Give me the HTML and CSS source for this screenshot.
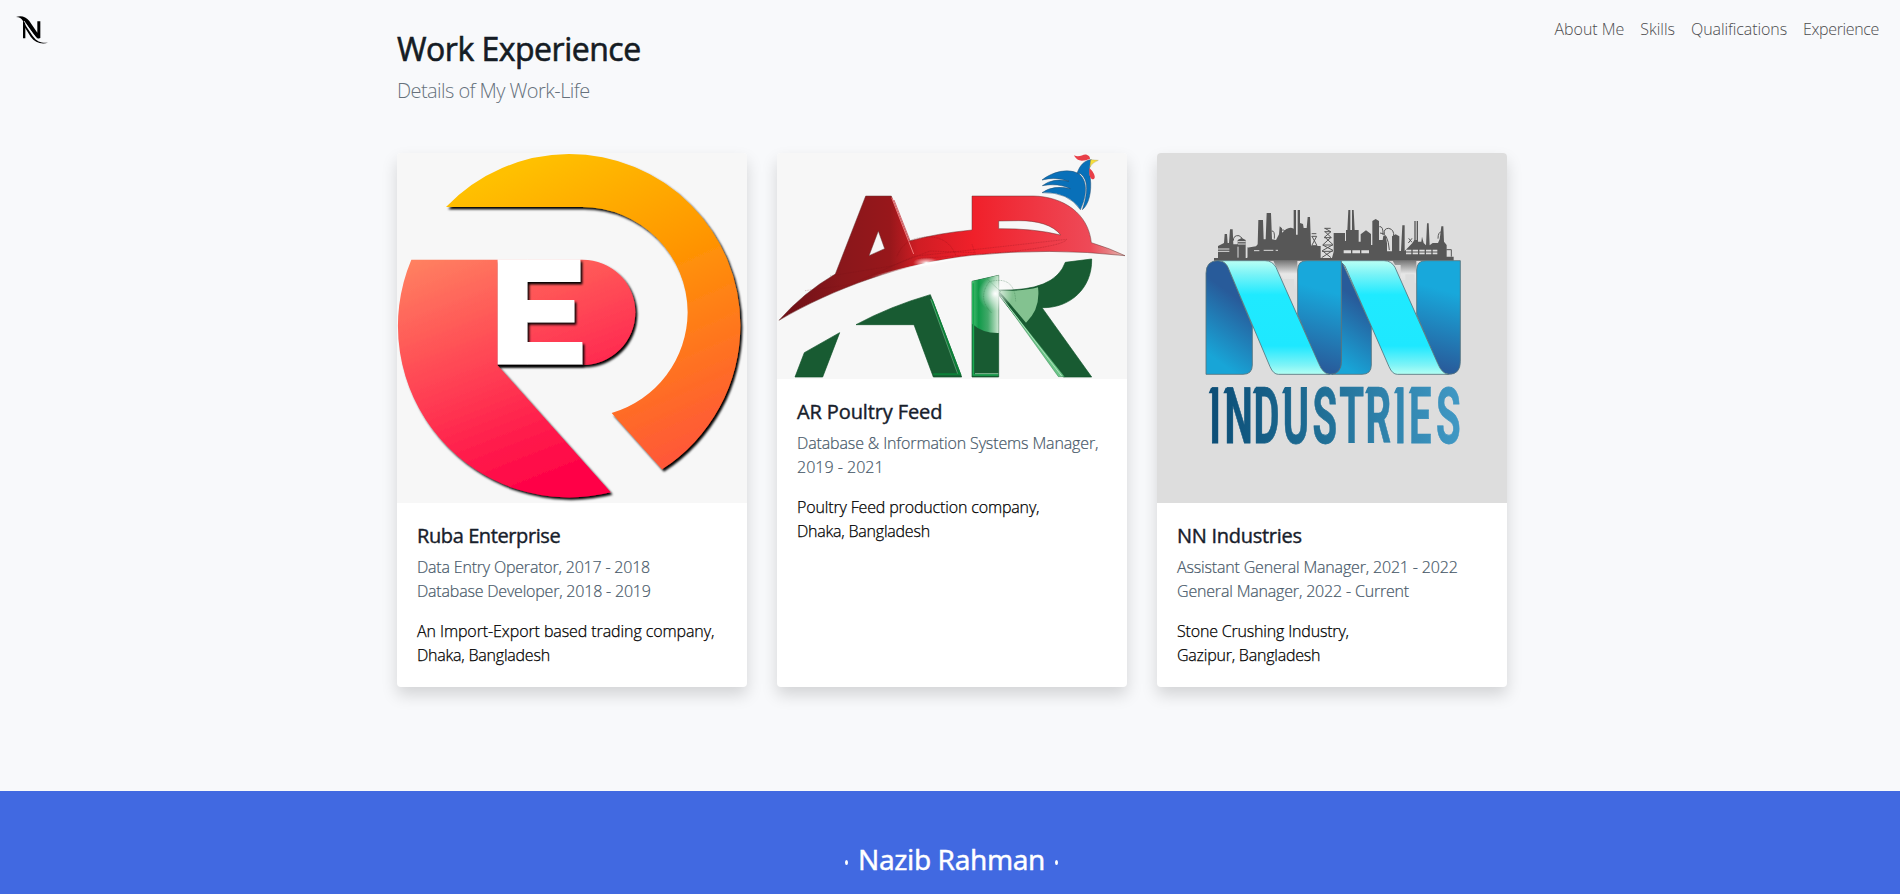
FILE: index.html
```html
<!DOCTYPE html>
<html lang="en">
<head>
<meta charset="utf-8">
<title>Nazib Rahman</title>
<link rel="stylesheet" href="styles.css">
</head>
<body>
<header class="topbar">
  <a class="brand" href="#">
    <svg viewBox="0 0 180 180" width="60" height="60" aria-label="N"><path d="M48 51C62 46 78 49 88 63L112 98V64H121V114L112 117L76 68V115H69V63C64 55 59 51 48 51Z"/><path d="M70 66L98 108C112 127 124 129 144 128C124 134 105 128 92 110L70 75Z"/><path d="M72 63L96 99Q108 117 119 120" fill="none" stroke="#f8f9fb" stroke-width="2.5"/></svg>
  </a>
  <nav class="nav">
    <a class="link about">About Me</a><a class="link skills">Skills</a><a class="link quals">Qualifications</a><a class="link exp">Experience</a>
  </nav>
</header>
<main class="work">
  <h2 class="heading">Work Experience</h2>
  <p class="lead">Details of My Work-Life</p>
  <div class="cards">
    <article class="card">
      <svg class="pic" viewBox="21 24 1050 1050">
        <defs>
          <linearGradient id="ora" gradientUnits="userSpaceOnUse" x1="400" y1="60" x2="800" y2="960"><stop offset="0" stop-color="#ffc000"/><stop offset=".4" stop-color="#ff9800"/><stop offset="1" stop-color="#ff5838"/></linearGradient>
          <linearGradient id="pink" gradientUnits="userSpaceOnUse" x1="120" y1="330" x2="400" y2="1050"><stop offset="0" stop-color="#ff8060"/><stop offset="1" stop-color="#ff0046"/></linearGradient>
          <linearGradient id="pink2" gradientUnits="userSpaceOnUse" x1="480" y1="345" x2="600" y2="660"><stop offset="0" stop-color="#ff635a"/><stop offset="1" stop-color="#ff2b50"/></linearGradient>
          <filter id="sh" x="-5%" y="-5%" width="112%" height="112%"><feDropShadow dx="6" dy="7" stdDeviation="3" flood-color="#000"/></filter>
        </defs>
        <rect x="21" y="24" width="1050" height="1050" fill="#f7f7f7"/>
        <path filter="url(#sh)" fill="url(#ora)" d="M168 186A514 514 0 0 1 537 27A514 514 0 0 1 1051 541A514 514 0 0 1 816 973L665 804A317 317 0 0 0 893 502A317 317 0 0 0 576 186Z"/>
        <g filter="url(#sh)"><path fill="url(#pink)" d="M64 344H322V660L662 1042A514 514 0 0 1 64 344Z"/><path fill="url(#pink2)" d="M322 344H578A158 158 0 0 1 578 660H322Z"/></g>
        <g filter="url(#sh)" fill="#fff"><rect x="323" y="343" width="89" height="316"/><rect x="411" y="343" width="160" height="68"/><rect x="411" y="465" width="142" height="67"/><rect x="411" y="591" width="166" height="68"/></g>
        <path d="M323 659h254v3H325z" fill="#000"/>
      </svg>
      <div class="body">
        <h5 class="title t1">Ruba Enterprise</h5>
        <p class="role"><span class="r1">Data Entry Operator, 2017 - 2018</span><br><span class="r2">Database Developer, 2018 - 2019</span></p>
        <p class="place"><span class="p1">An Import-Export based trading company,</span><br><span class="dhaka">Dhaka, Bangladesh</span></p>
      </div>
    </article>
    <article class="card">
      <svg class="pic" viewBox="21 24 1050 678">
        <defs>
          <linearGradient id="red" gradientUnits="userSpaceOnUse" x1="30" y1="0" x2="1065" y2="0"><stop offset="0" stop-color="#6d1017"/><stop offset=".18" stop-color="#8a171b"/><stop offset=".32" stop-color="#98171b"/><stop offset=".4" stop-color="#d01d24"/><stop offset=".56" stop-color="#f0202a"/><stop offset=".9" stop-color="#ee4a58"/><stop offset=".95" stop-color="#e77c80"/><stop offset="1" stop-color="#e8c0b8"/></linearGradient>
          <radialGradient id="glow"><stop offset="0" stop-color="#fff"/><stop offset=".25" stop-color="#fff" stop-opacity=".65"/><stop offset="1" stop-color="#fff" stop-opacity="0"/></radialGradient>
          <linearGradient id="leg" x1="0" x2="1" y1="0" y2="0"><stop offset="0" stop-color="#4cbd73"/><stop offset=".25" stop-color="#109a49"/><stop offset=".6" stop-color="#43a96a"/><stop offset="1" stop-color="#cde8d2"/></linearGradient>
          <linearGradient id="edge" gradientUnits="userSpaceOnUse" x1="300" y1="390" x2="640" y2="320"><stop offset="0" stop-color="#fff" stop-opacity="0"/><stop offset=".5" stop-color="#fff"/><stop offset="1" stop-color="#fff" stop-opacity="0"/></linearGradient>
        </defs>
        <rect x="21" y="24" width="1050" height="678" fill="#f7f7f7"/>
        <path fill="url(#red)" fill-rule="evenodd" stroke="#6b3030" stroke-width="1.5" d="M27 526Q100 443 196 387L287 153H364L418 288Q500 265 606 255V153H790C880 155 955 205 964 293Q1020 310 1065 332Q840 307 606 331C400 354 190 430 27 526ZM297 332L344 311L325 258ZM686 228V251Q790 250 872 270C850 240 800 226 745 227Z"/>
        <path d="M365 158L431 327" stroke="#f5797b" stroke-width="3"/><path d="M372 165L420 287" stroke="#c51d25" stroke-width="2"/>
        <path d="M250 414Q420 358 635 329" fill="none" stroke="url(#edge)" stroke-width="6"/><ellipse cx="469" cy="353" rx="40" ry="16" fill="url(#glow)"/>
        <g fill="none" stroke="#721118" stroke-width="1" stroke-dasharray="3 2" opacity=".75"><path d="M105 437L240 419L432 334L890 283Q880 303 710 321L445 341M180 393L365 363L480 318L615 323M381 334Q400 285 450 278Q530 265 557 330M606 298L616 325"/></g>
        <g fill="#185b32" stroke="#0d5127" stroke-width="2"><path d="M75 696L103 623L209 563L158 696ZM258 539Q360 484 481 449L575 696H490L432 539Z"/><path d="M606 409L686 391V696H606ZM686 435Q855 440 886 352L965 342C967 430 900 490 816 488L965 696H880L686 450Z"/></g>
        <path d="M485 464L570 688H490" fill="none" stroke="#0b8138" stroke-width="6"/><path d="M482 462L563 686" fill="none" stroke="#8fd3a4" stroke-width="1.5"/>
        <path fill="url(#leg)" d="M606 409L686 391V564Q638 565 606 536Z"/><path d="M610 415V690H685" fill="none" stroke="#18a951" stroke-width="5"/><path d="M615 686H685" stroke="#bdebc9" stroke-width="2"/>
        <path fill="#83c290" d="M686 437Q760 439 804 427Q812 492 768 533L700 452Z"/>
        <path fill="#6cc488" stroke="#0e6830" stroke-width="1" d="M686 446L884 695H865Z"/><path d="M693 455L875 693" stroke="#d0eed6" stroke-width="2"/>
        <circle cx="676" cy="446" r="52" fill="url(#glow)"/><path d="M650 400L692 440M665 504Q620 460 658 410Q735 390 737 470" fill="none" stroke="#286b40" stroke-width="1" stroke-dasharray="3 2"/>
        <g fill="#0870b9" stroke="#244e70" stroke-width="1.5"><path d="M816 105C850 78 896 70 924 85C956 105 950 155 931 194Q895 140 816 143Q850 119 901 131Q865 113 817 122Q850 97 897 109Q858 94 816 105Z"/><path d="M921 85C929 62 943 45 964 44Q954 72 961 100C966 140 956 180 937 194C952 149 958 105 931 86Z"/></g>
        <path fill="#e83f48" d="M912 31C929 40 938 26 950 29Q960 32 960 42C942 47 924 54 912 31ZM958 70C970 78 983 103 967 103C956 97 958 83 958 70Z"/><path fill="#f8df38" stroke="#a19648" d="M962 44L985 46Q967 52 960 66Z"/>
      </svg>
      <div class="body">
        <h5 class="title t2">AR Poultry Feed</h5>
        <p class="role"><span class="r3">Database &amp; Information Systems Manager,</span><br><span class="r4">2019 - 2021</span></p>
        <p class="place"><span class="p2">Poultry Feed production company,</span><br><span class="dhaka">Dhaka, Bangladesh</span></p>
      </div>
    </article>
    <article class="card">
      <svg class="pic" viewBox="21 24 1050 1050">
        <defs>
          <linearGradient id="cy" x1="0" x2="0" y1="0" y2="1"><stop offset="0" stop-color="#b9fff5"/><stop offset=".12" stop-color="#7af3f7"/><stop offset=".3" stop-color="#1feaff"/><stop offset=".75" stop-color="#1ee8ff"/><stop offset=".92" stop-color="#7ff4f7"/><stop offset="1" stop-color="#b5fff4"/></linearGradient>
          <linearGradient id="bl" gradientUnits="userSpaceOnUse" x1="275" y1="470" x2="165" y2="620"><stop offset="0" stop-color="#285b9a"/><stop offset="1" stop-color="#18a5d7"/></linearGradient>
          <linearGradient id="bl2" gradientUnits="userSpaceOnUse" x1="632" y1="470" x2="522" y2="620"><stop offset="0" stop-color="#285b9a"/><stop offset="1" stop-color="#18a5d7"/></linearGradient>
          <linearGradient id="br" gradientUnits="userSpaceOnUse" x1="540" y1="440" x2="480" y2="660"><stop offset="0" stop-color="#18a8db"/><stop offset="1" stop-color="#285d9c"/></linearGradient>
          <linearGradient id="br2" gradientUnits="userSpaceOnUse" x1="896" y1="440" x2="836" y2="660"><stop offset="0" stop-color="#18a8db"/><stop offset="1" stop-color="#285d9c"/></linearGradient>
          <linearGradient id="word" gradientUnits="userSpaceOnUse" x1="147" y1="0" x2="774" y2="0"><stop offset="0" stop-color="#0b4d76"/><stop offset=".45" stop-color="#206f96"/><stop offset="1" stop-color="#4098c4"/></linearGradient>
          <linearGradient id="ticks" gradientUnits="userSpaceOnUse" x1="176" y1="0" x2="929" y2="0"><stop offset="0" stop-color="#0b4d76"/><stop offset=".45" stop-color="#206f96"/><stop offset="1" stop-color="#4098c4"/></linearGradient>
          <linearGradient id="fade" x1="0" x2="0" y1="0" y2="1"><stop offset="0" stop-color="#777"/><stop offset=".45" stop-color="#e7e7e7"/><stop offset="1" stop-color="#ddd"/></linearGradient>
        </defs>
        <rect x="21" y="24" width="1050" height="1050" fill="#ddd"/>
        <path fill="url(#fade)" d="M370 347H442V435H432V402H400L380 370ZM728 347H799V415H794V388H766V405H752V360H735Z"/>
        <g fill="#575757"><path d="M192 347V339H204V303L222 294L224 267H231L233 294H237L240 253H248L250 298H263V285L275 279L287 285V339H291V308L318 304L323 298L325 225H339L341 283H347L350 204H363L366 283L378 285L387 268L389 244L396 250V263L408 253Q420 245 431 251V195H438V269H443V195H450V234L459 237L461 249H470L473 216H480L483 303H512V339H546L551 320V264H585V288H588V255H592L595 195H601V255H606V195H611L614 255H626V290H632V268L648 256L663 267V300H667V228L677 222L687 228V285H698L700 272H707L711 295V319H726V274L737 268L748 274V318H753L757 241H764V318L788 293L793 284V228H797V285H800V228H804V290H814L816 275L821 294L828 301L831 235H836L839 301L848 294H864L869 283L874 244H880L882 290L890 300V335H911V347Z"/></g>
        <g fill="none" stroke="#575757" stroke-width="3"><path d="M250 287Q250 270 267 272L277 280M365 258Q375 256 373 281M390 260Q400 248 408 263M688 245Q700 242 699 270M703 268Q700 250 716 250Q733 253 731 275M690 264Q714 262 718 315M864 281Q864 260 876 260M889 314H904V335"/><path d="M485 266H499M485 274H500L485 302H501L486 274M523 250H542M523 260H543M525 250L542 260M525 260L543 277L518 300L549 316L515 338M543 260L524 276L549 299L517 317L543 338M522 278H545M519 300H548M516 319H548M776 280L786 292M786 280L775 294"/></g>
        <g stroke="#ddd" stroke-width="3"><path d="M204 312H238M204 319H238M263 290H287M264 297H287M264 305V338M291 309V338M312 317H328M341 316H370M377 316H384"/><path d="M581 320H603M607 320H630M634 320H657" stroke-width="9"/><path d="M768 317H862M768 325H862" stroke-width="5" stroke-dasharray="16 4"/></g>
        <g stroke="#56747d" stroke-width="2.5">
          <path fill="url(#bl)" d="M168 688V385Q168 347 204 347Q225 347 234 367L307 544V660Q307 688 279 688Z"/>
          <path fill="url(#bl2)" d="M574 347L664 544V660Q664 688 636 688H545Q574 680 574 650Z"/>
          <path fill="url(#br)" d="M443 508V375Q443 347 471 347H574V650Q574 688 539 688Q515 688 506 660Z"/>
          <path fill="url(#br2)" d="M800 508V375Q800 347 828 347H931V650Q931 688 896 688Q875 688 864 660Z"/>
          <path fill="url(#cy)" d="M205 347H345Q367 347 378 367L506 655Q519 687 539 688H385Q370 688 360 665L234 367Q226 348 205 347Z"/>
          <path fill="url(#cy)" d="M574 347H702Q724 347 735 367L863 655Q876 687 896 688H742Q727 688 717 665L591 377Q586 360 574 352Z"/>
        </g>
        <text class="industries" transform="translate(0 894) scale(1.2 2.32)" x="148 186 259 332 406 473 539 611 647.5 715" fill="url(#word)" stroke="url(#word)">INDUSTRIES</text>
        <path fill="url(#ticks)" d="M176 745L183 728H200V745ZM220 745L227 728H244V745ZM308 745L315 728H332V745ZM396 745L403 728H420V745ZM645 745L652 728H668V745ZM732 745L739 728H755V745ZM776 745L783 728H799V745Z"/>
      </svg>
      <div class="body">
        <h5 class="title t3">NN Industries</h5>
        <p class="role"><span class="r5">Assistant General Manager, 2021 - 2022</span><br><span class="r6">General Manager, 2022 - Current</span></p>
        <p class="place"><span class="p3">Stone Crushing Industry,</span><br><span class="p4">Gazipur, Bangladesh</span></p>
      </div>
    </article>
  </div>
</main>
<footer class="footer"><i class="dot"></i><span class="name">Nazib Rahman</span><i class="dot"></i></footer>
</body>
</html>
```

FILE: styles.css
```css
* { box-sizing: border-box; }
body {
  margin: 0;
  height: 894px;
  overflow: hidden;
  display: grid;
  grid-template: 791px 103px / 1fr;
  background: #f8f9fb;
  color: #000;
  font: 300 16px/24px "Open Sans", "Noto Sans", sans-serif;
}
h2, h5, p { margin: 0; }
.topbar {
  position: absolute;
  inset: 0 0 auto;
  height: 60px;
  display: flex;
  justify-content: space-between;
}
.brand { display: block; width: 60px; height: 60px; }
.nav { display: flex; gap: 16px; padding: 17px 21px 0 0; color: #4c4c4e; }
.link { white-space: nowrap; }
.about { letter-spacing: -.05px; }
.quals { letter-spacing: -.08px; }
.exp { letter-spacing: -.36px; }
.work { width: 1110px; margin-left: 397px; padding-top: 30px; }
.heading { font-size: 32px; line-height: 38px; font-weight: 400; letter-spacing: -.5px; -webkit-text-stroke: .6px #151c24; color: #151c24; white-space: nowrap; }
.lead { margin-top: 8px; font-size: 20px; line-height: 30px; letter-spacing: -.57px; color: #66717c; white-space: nowrap; }
.cards { display: grid; grid-template-columns: repeat(3, 350px); gap: 30px; margin-top: 47px; height: 534px; }
.card { background: #fff; border-radius: 4px; overflow: hidden; box-shadow: 0 8px 16px rgba(0, 0, 0, .15); }
.pic { display: block; width: 350px; }
.body { padding: 21px 20px 20px; white-space: nowrap; }
.title { margin-bottom: 7px; font-size: 20px; line-height: 24px; font-weight: 400; -webkit-text-stroke: .4px #17202b; color: #17202b; }
.t1 { letter-spacing: -.4px; }
.t2 { letter-spacing: -.12px; }
.t3 { letter-spacing: -.28px; }
.role { color: #485969; -webkit-text-stroke: .2px #485969; margin-bottom: 16px; }
.place { -webkit-text-stroke: .25px #000; }
.r1 { letter-spacing: -.2px; }
.r2 { letter-spacing: -.2px; }
.r3 { letter-spacing: -.13px; }
.r5 { letter-spacing: -.17px; }
.r6 { letter-spacing: -.18px; }
.p1 { letter-spacing: -.09px; }
.dhaka { letter-spacing: -.22px; }
.p2 { letter-spacing: -.15px; }
.p3 { letter-spacing: -.18px; }
.p4 { letter-spacing: -.22px; }
.industries { font: 700 100px "Roboto", sans-serif; stroke-width: 1px; }
.footer { background: #4169e1; display: flex; justify-content: center; padding: 47px 0 0 3px; gap: 10px; color: #fff; }
.name { font: 400 28px/42px "Noto Sans", sans-serif; letter-spacing: -.38px; -webkit-text-stroke: .4px #fff; }
.dot { width: 3px; height: 5px; margin-top: 22px; border-radius: 50%; background: #fff; }
```
